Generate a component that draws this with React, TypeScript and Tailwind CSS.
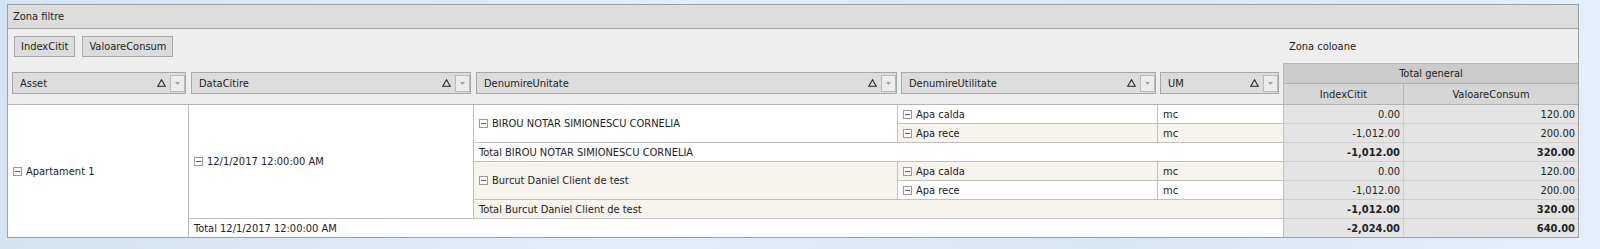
import React from "react";

const font = "font-['DejaVu_Sans_Condensed','DejaVu_Sans',sans-serif]";

function Minus() {
  return (
    <span className="inline-flex w-[9px] h-[9px] border border-[#9a9a9a] bg-white items-center justify-center mr-[4px] shrink-0">
      <span className="block w-[5px] h-px bg-[#5a5a5a]" />
    </span>
  );
}

function SortTri() {
  return (
    <svg width="9" height="8" viewBox="0 0 9 8" className="shrink-0">
      <path d="M4.5 0.8 L8.3 7.3 H0.7 Z" fill="none" stroke="#222" strokeWidth="1.1" />
    </svg>
  );
}

function DropBtn() {
  return (
    <div className="w-[15px] h-[17px] ml-[4px] border border-[#b9b9b9] bg-[#ececec] flex items-center justify-center shrink-0">
      <svg width="5" height="3" viewBox="0 0 5 3">
        <path d="M0 0H5L2.5 3Z" fill="#a3a3a3" />
      </svg>
    </div>
  );
}

function FieldHeader({ label, w, ml }: { label: string; w: string; ml: string }) {
  return (
    <div className={`${w} ${ml} h-[22px] border border-[#a8a8a8] bg-[#dcdcdc] flex items-center pl-[7px] pr-0 shrink-0`}>
      <span className="flex-1 truncate">{label}</span>
      <SortTri />
      <DropBtn />
    </div>
  );
}

const rowCell = "border-r border-b border-[#c0c0c0] flex items-center pl-[5px] overflow-hidden whitespace-nowrap";
const dataCell = "border-b border-[#cfcfcf] bg-[#e4e4e4] flex items-center justify-end pr-[3px] whitespace-nowrap";

export default function App() {
  const data: [string, string, boolean][] = [
    ["0.00", "120.00", false],
    ["-1,012.00", "200.00", false],
    ["-1,012.00", "320.00", true],
    ["0.00", "120.00", false],
    ["-1,012.00", "200.00", false],
    ["-1,012.00", "320.00", true],
    ["-2,024.00", "640.00", true],
  ];
  const rowStarts = ["row-start-1", "row-start-2", "row-start-3", "row-start-4", "row-start-5", "row-start-6", "row-start-7"];

  return (
    <div className={`w-[1600px] h-[249px] bg-[linear-gradient(100deg,#d3e3f2_0%,#e2edf8_40%,#d8e7f4_70%,#e4eff9_100%)] pt-[4px] pl-[7px] text-[11px] leading-[13px] text-[#222222] ${font}`}>
      <div className="w-[1572px] border border-[#a0a0a0] bg-[#eeeeee]">
        {/* Zona filtre */}
        <div className="h-[24px] bg-[#dcdcdc] border-b border-[#a8a8a8] flex items-center pl-[5px]">Zona filtre</div>

        {/* Row A: data fields + column zone */}
        <div className="flex h-[34px]">
          <div className="w-[1275px] flex items-center pl-[6px] gap-[7px]">
            <div className="h-[21px] border border-[#a8a8a8] bg-[#dcdcdc] px-[6px] flex items-center">IndexCitit</div>
            <div className="h-[21px] border border-[#a8a8a8] bg-[#dcdcdc] px-[6px] flex items-center">ValoareConsum</div>
          </div>
          <div className="w-[295px] flex items-center pl-[6px]">Zona coloane</div>
        </div>

        {/* Row B: row field headers + column headers */}
        <div className="flex h-[41px]">
          <div className="w-[1275px] flex items-start pt-[9px]">
            <FieldHeader label="Asset" w="w-[174px]" ml="ml-[4px]" />
            <FieldHeader label="DataCitire" w="w-[280px]" ml="ml-[5px]" />
            <FieldHeader label="DenumireUnitate" w="w-[421px]" ml="ml-[5px]" />
            <FieldHeader label="DenumireUtilitate" w="w-[255px]" ml="ml-[4px]" />
            <FieldHeader label="UM" w="w-[119px]" ml="ml-[4px]" />
          </div>
          <div className="w-[295px] border-l border-[#b4b4b4] flex flex-col">
            <div className="h-[21px] border-t border-b border-[#b4b4b4] bg-[#cbcbcb] flex items-center justify-center">Total general</div>
            <div className="h-[20px] flex">
              <div className="w-[120px] border-r border-[#b4b4b4] bg-[#d6d6d6] flex items-center justify-center">IndexCitit</div>
              <div className="w-[174px] bg-[#d6d6d6] flex items-center justify-center">ValoareConsum</div>
            </div>
          </div>
        </div>

        {/* Data grid */}
        <div className="grid grid-cols-[181px_285px_424px_260px_126px_120px_174px] grid-rows-[19px_19px_19px_19px_19px_19px_18px] border-t border-[#b4b4b4] bg-white">
          <div className={`col-start-1 row-start-1 row-span-7 bg-white border-r border-[#c0c0c0] flex items-center pl-[5px]`}>
            <Minus />Apartament 1
          </div>
          <div className={`col-start-2 row-start-1 row-span-6 bg-white ${rowCell}`}>
            <Minus />12/1/2017 12:00:00 AM
          </div>

          <div className={`col-start-3 row-start-1 row-span-2 bg-white ${rowCell}`}>
            <Minus />BIROU NOTAR SIMIONESCU CORNELIA
          </div>
          <div className={`col-start-4 row-start-1 bg-white ${rowCell}`}>
            <Minus />Apa calda
          </div>
          <div className={`col-start-5 row-start-1 bg-white ${rowCell}`}>mc</div>
          <div className={`col-start-4 row-start-2 bg-[#f7f4ed] ${rowCell}`}>
            <Minus />Apa rece
          </div>
          <div className={`col-start-5 row-start-2 bg-[#f7f4ed] ${rowCell}`}>mc</div>
          <div className={`col-start-3 col-span-3 row-start-3 bg-white ${rowCell}`}>Total BIROU NOTAR SIMIONESCU CORNELIA</div>

          <div className={`col-start-3 row-start-4 row-span-2 bg-[#f7f4ed] ${rowCell}`}>
            <Minus />Burcut Daniel Client de test
          </div>
          <div className={`col-start-4 row-start-4 bg-[#f7f4ed] ${rowCell}`}>
            <Minus />Apa calda
          </div>
          <div className={`col-start-5 row-start-4 bg-[#f7f4ed] ${rowCell}`}>mc</div>
          <div className={`col-start-4 row-start-5 bg-white ${rowCell}`}>
            <Minus />Apa rece
          </div>
          <div className={`col-start-5 row-start-5 bg-white ${rowCell}`}>mc</div>
          <div className={`col-start-3 col-span-3 row-start-6 bg-[#f7f4ed] ${rowCell}`}>Total Burcut Daniel Client de test</div>

          <div className={`col-start-2 col-span-4 row-start-7 bg-white border-r border-[#c0c0c0] flex items-center pl-[5px] whitespace-nowrap`}>
            Total 12/1/2017 12:00:00 AM
          </div>

          {data.map(([a, b, bold], i) => (
            <React.Fragment key={i}>
              <div className={`col-start-6 ${rowStarts[i]} ${dataCell} border-r ${i === 6 ? "border-b-0" : ""} ${bold ? "font-bold" : ""}`}>{a}</div>
              <div className={`col-start-7 ${rowStarts[i]} ${dataCell} ${i === 6 ? "border-b-0" : ""} ${bold ? "font-bold" : ""}`}>{b}</div>
            </React.Fragment>
          ))}
        </div>
      </div>
    </div>
  );
}
